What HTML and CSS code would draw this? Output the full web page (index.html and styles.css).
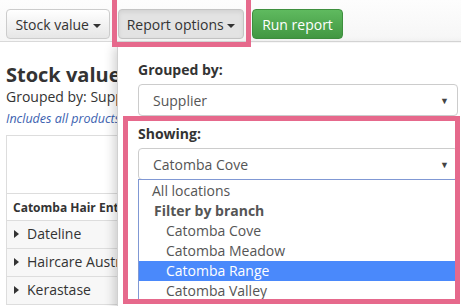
FILE: index.html
```html
<!DOCTYPE html>
<html lang="en">
    <head>
        <meta charset="UTF-8" />
        <title>Stock value report</title>
        <link rel="stylesheet" href="styles.css">
    </head>
    <body>
        <div class="toolbar">
            <button class="btn btn-stock">Stock value <span class="caret"></span></button>
            <button class="btn btn-open">Report options <span class="caret"></span></button>
            <button class="btn btn-success">Run report</button>
        </div>

        <div class="report">
            <h2>Stock value</h2>
            <p class="sub">Grouped by: Supplier</p>
            <p class="note">Includes all products with stock on hand</p>
            <table class="grid">
                <thead>
                    <tr><th class="head-space"></th></tr>
                </thead>
                <tbody>
                    <tr class="group"><td>Catomba Hair Enterprises</td></tr>
                    <tr class="row"><td><span class="tri"></span>Dateline</td></tr>
                    <tr class="row"><td><span class="tri"></span>Haircare Australia</td></tr>
                    <tr class="row"><td><span class="tri"></span>Kerastase</td></tr>
                </tbody>
            </table>
        </div>

        <div class="options-panel">
            <label class="field-label">Grouped by:</label>
            <div class="select">Supplier <span class="arrow">&#9660;</span></div>

            <label class="field-label">Showing:</label>
            <div class="select-wrap">
                <div class="select">Catomba Cove <span class="arrow">&#9660;</span></div>
                <ul class="listbox">
                    <li class="opt">All locations</li>
                    <li class="optgroup">Filter by branch</li>
                    <li class="opt sub-opt">Catomba Cove</li>
                    <li class="opt sub-opt">Catomba Meadow</li>
                    <li class="opt sub-opt selected">Catomba Range</li>
                    <li class="opt sub-opt">Catomba Valley</li>
                </ul>
            </div>
        </div>

        <div class="highlight hl-button"></div>
        <div class="highlight hl-showing"></div>
    </body>
</html>
```

FILE: styles.css
```css
body {
    font-family: "Open Sans", Arial, sans-serif;
    font-size: 14px;
    color: #333;
    margin: 0;
    overflow: hidden;
}
.toolbar {
    height: 42px;
    box-sizing: border-box;
    padding: 9px 6px 0;
    display: flex;
    gap: 8px;
    align-items: flex-start;
    background: linear-gradient(#fdfdfd, #f6f6f6);
    border-bottom: 1px solid #d9d9d9;
}
.btn {
    height: 30px;
    padding: 0;
    font-family: inherit;
    font-size: 14px;
    color: #333;
    border: 1px solid #ccc;
    border-radius: 4px;
    background: linear-gradient(#ffffff, #e6e6e6);
    white-space: nowrap;
}
.btn-stock {
    width: 104px;
}
.btn-open {
    width: 126px;
    background: #e3e3e3;
    border-color: #c4c4c4;
    box-shadow: inset 0 2px 4px rgba(0, 0, 0, 0.08);
}
.btn-success {
    width: 91px;
    color: #fff;
    background: linear-gradient(#5fba5f, #429742);
    border-color: #3e8f3e;
}
.caret {
    display: inline-block;
    width: 0;
    height: 0;
    margin-left: 0;
    vertical-align: middle;
    border-top: 4px solid #333;
    border-left: 4px solid transparent;
    border-right: 4px solid transparent;
}
.report {
    padding: 0 6px;
}
.report h2 {
    margin: 22px 0 0;
    font-size: 20px;
    line-height: 22px;
    font-weight: 700;
}
.sub {
    margin: 0;
    line-height: 21px;
}
.note {
    margin: 3px 0 0;
    font-size: 12.5px;
    line-height: 17px;
    font-style: italic;
    color: #3b5fb0;
}
.grid {
    margin-top: 8px;
    width: 100%;
    border-collapse: collapse;
    border: 1px solid #ddd;
}
.head-space {
    height: 55px;
}
.grid td {
    border-top: 1px solid #ddd;
    padding: 0 6px;
    white-space: nowrap;
}
.group td {
    height: 26px;
    font-size: 12px;
    font-weight: 700;
    background: #fff;
}
.row td {
    height: 24px;
    padding-bottom: 3px;
    background: #f7f7f7;
}
.tri {
    display: inline-block;
    width: 0;
    height: 0;
    margin: 0 8px 0 1px;
    vertical-align: 1px;
    border-left: 5px solid #333;
    border-top: 4px solid transparent;
    border-bottom: 4px solid transparent;
}
.options-panel {
    position: absolute;
    left: 117px;
    top: 43px;
    width: 360px;
    height: 300px;
    box-sizing: border-box;
    padding: 17px 0 0 20px;
    background: #fff;
    border-left: 1px solid #d0d0d0;
    box-shadow: -3px 4px 10px rgba(0, 0, 0, 0.18);
}
.field-label {
    display: block;
    font-weight: 700;
    line-height: 20px;
    margin-bottom: 4px;
}
.select {
    width: 320px;
    height: 32px;
    box-sizing: border-box;
    padding: 0 14px;
    display: flex;
    align-items: center;
    justify-content: space-between;
    color: #555;
    border: 1px solid #ccc;
    border-radius: 4px;
    background: #fff;
    margin-bottom: 8px;
}
.arrow {
    font-size: 9px;
    color: #444;
    margin-right: -6px;
}
.select-wrap {
    position: relative;
}
.listbox {
    position: absolute;
    left: 0;
    top: 31px;
    width: 320px;
    box-sizing: border-box;
    margin: 0;
    padding: 1px 0 0;
    list-style: none;
    background: #fff;
    border: 1px solid #8098d4;
}
.listbox li {
    line-height: 20px;
    color: #555;
}
.opt {
    padding-left: 13px;
}
.optgroup {
    padding-left: 15px;
    font-weight: 700;
}
.sub-opt {
    padding-left: 27px;
}
.listbox .selected {
    background: #4a89fb;
    color: #fff;
}
.highlight {
    position: absolute;
    box-sizing: border-box;
    border: 5px solid #e6698c;
}
.hl-button {
    left: 112px;
    top: -5px;
    width: 139px;
    height: 52px;
}
.hl-showing {
    left: 123px;
    top: 116px;
    width: 337px;
    height: 188px;
}
```
